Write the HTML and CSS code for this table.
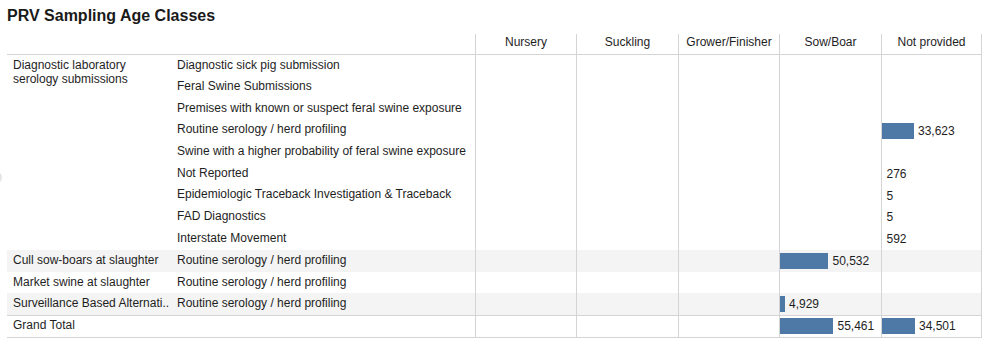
FILE: index.html
```html
<!DOCTYPE html>
<html>
<head>
<meta charset="utf-8">
<link rel="stylesheet" href="styles.css">
</head>
<body>
<div class="edge-dot"></div>
<h1 class="title">PRV Sampling Age Classes</h1>
<div class="table">
  <div class="row head">
    <div class="hcorner"></div>
    <div class="c hc">Nursery</div>
    <div class="c hc">Suckling</div>
    <div class="c hc">Grower/Finisher</div>
    <div class="c hc">Sow/Boar</div>
    <div class="c hc last">Not provided</div>
  </div>

  <div class="rh1 span9">Diagnostic laboratory serology submissions</div>

  <div class="row">
    <div class="rh2">Diagnostic sick pig submission</div>
    <div class="c"></div><div class="c"></div><div class="c"></div><div class="c"></div><div class="c last"></div>
  </div>
  <div class="row">
    <div class="rh2">Feral Swine Submissions</div>
    <div class="c"></div><div class="c"></div><div class="c"></div><div class="c"></div><div class="c last"></div>
  </div>
  <div class="row">
    <div class="rh2">Premises with known or suspect feral swine exposure</div>
    <div class="c"></div><div class="c"></div><div class="c"></div><div class="c"></div><div class="c last"></div>
  </div>
  <div class="row">
    <div class="rh2">Routine serology / herd profiling</div>
    <div class="c"></div><div class="c"></div><div class="c"></div><div class="c"></div>
    <div class="c last"><span class="bar" style="width:31.5px"></span><span class="val">33,623</span></div>
  </div>
  <div class="row">
    <div class="rh2">Swine with a higher probability of feral swine exposure</div>
    <div class="c"></div><div class="c"></div><div class="c"></div><div class="c"></div><div class="c last"></div>
  </div>
  <div class="row">
    <div class="rh2">Not Reported</div>
    <div class="c"></div><div class="c"></div><div class="c"></div><div class="c"></div>
    <div class="c last"><span class="bar" style="width:0px"></span><span class="val">276</span></div>
  </div>
  <div class="row">
    <div class="rh2">Epidemiologic Traceback Investigation &amp; Traceback</div>
    <div class="c"></div><div class="c"></div><div class="c"></div><div class="c"></div>
    <div class="c last"><span class="bar" style="width:0px"></span><span class="val">5</span></div>
  </div>
  <div class="row">
    <div class="rh2">FAD Diagnostics</div>
    <div class="c"></div><div class="c"></div><div class="c"></div><div class="c"></div>
    <div class="c last"><span class="bar" style="width:0px"></span><span class="val">5</span></div>
  </div>
  <div class="row">
    <div class="rh2">Interstate Movement</div>
    <div class="c"></div><div class="c"></div><div class="c"></div><div class="c"></div>
    <div class="c last"><span class="bar" style="width:0px"></span><span class="val">592</span></div>
  </div>

  <div class="row band tail">
    <div class="rh1">Cull sow-boars at slaughter</div>
    <div class="rh2">Routine serology / herd profiling</div>
    <div class="c"></div><div class="c"></div><div class="c"></div>
    <div class="c"><span class="bar" style="width:48px"></span><span class="val">50,532</span></div>
    <div class="c last"></div>
  </div>
  <div class="row tail">
    <div class="rh1">Market swine at slaughter</div>
    <div class="rh2">Routine serology / herd profiling</div>
    <div class="c"></div><div class="c"></div><div class="c"></div><div class="c"></div><div class="c last"></div>
  </div>
  <div class="row band tail">
    <div class="rh1">Surveillance Based Alternati..</div>
    <div class="rh2">Routine serology / herd profiling</div>
    <div class="c"></div><div class="c"></div><div class="c"></div>
    <div class="c"><span class="bar" style="width:4.5px"></span><span class="val">4,929</span></div>
    <div class="c last"></div>
  </div>
  <div class="row gt">
    <div class="rh1">Grand Total</div>
    <div class="rh2"></div>
    <div class="c"></div><div class="c"></div><div class="c"></div>
    <div class="c"><span class="bar" style="width:53px"></span><span class="val">55,461</span></div>
    <div class="c last"><span class="bar" style="width:32.5px"></span><span class="val">34,501</span></div>
  </div>
</div>
</body>
</html>
```

FILE: styles.css
```css
html, body {
  margin: 0;
  padding: 0;
  background: #ffffff;
}

body {
  position: relative;
  width: 985px;
  height: 345px;
  overflow: hidden;
  font-family: "Liberation Sans", Arial, sans-serif;
  color: #1e1e1e;
}

.edge-dot {
  position: absolute;
  left: -8px;
  top: 172px;
  width: 10px;
  height: 11px;
  border-radius: 50%;
  background: #e6e6e6;
}

.title {
  margin: 0;
  padding: 7px 0 0 7px;
  height: 18px;
  font-size: 16px;
  line-height: 18px;
  font-weight: bold;
  color: #1a1a1a;
}

.table {
  display: grid;
  margin: 9px 0 0 7px;
  width: 975px;
  grid-template-columns: 170px 298px 101px 102px 101px 102px 101px;
  grid-template-rows: 21px repeat(9, 21.667px) 22px 21px 22px 23px;
  font-size: 12px;
  line-height: 14px;
}

.row {
  display: contents;
}

.hcorner {
  grid-column: 1 / span 2;
  border-bottom: 1px solid #d4d4d4;
}

.c {
  border-left: 1px solid #d4d4d4;
  display: flex;
  align-items: center;
  white-space: nowrap;
}

.c.last {
  border-right: 1px solid #d4d4d4;
}

.hc {
  justify-content: center;
  align-items: flex-start;
  padding-top: 1px;
  border-bottom: 1px solid #d4d4d4;
}

.rh1 {
  grid-column: 1;
  padding: 2.5px 0 0 6px;
  white-space: nowrap;
  overflow: hidden;
}

.rh1.span9 {
  grid-row: span 9;
  white-space: normal;
  padding-right: 30px;
}

.rh2 {
  grid-column: 2;
  padding-top: 2.5px;
  white-space: nowrap;
}

.tail > .rh1,
.tail > .rh2 {
  padding-top: 3.5px;
}

.band > div {
  background: #f4f4f4;
}

.gt > div {
  border-top: 1px solid #d4d4d4;
  border-bottom: 1px solid #d4d4d4;
}

.bar {
  display: block;
  height: 16px;
  background: #4e79a7;
  flex: none;
}

.val {
  margin-left: 4.5px;
}
```
